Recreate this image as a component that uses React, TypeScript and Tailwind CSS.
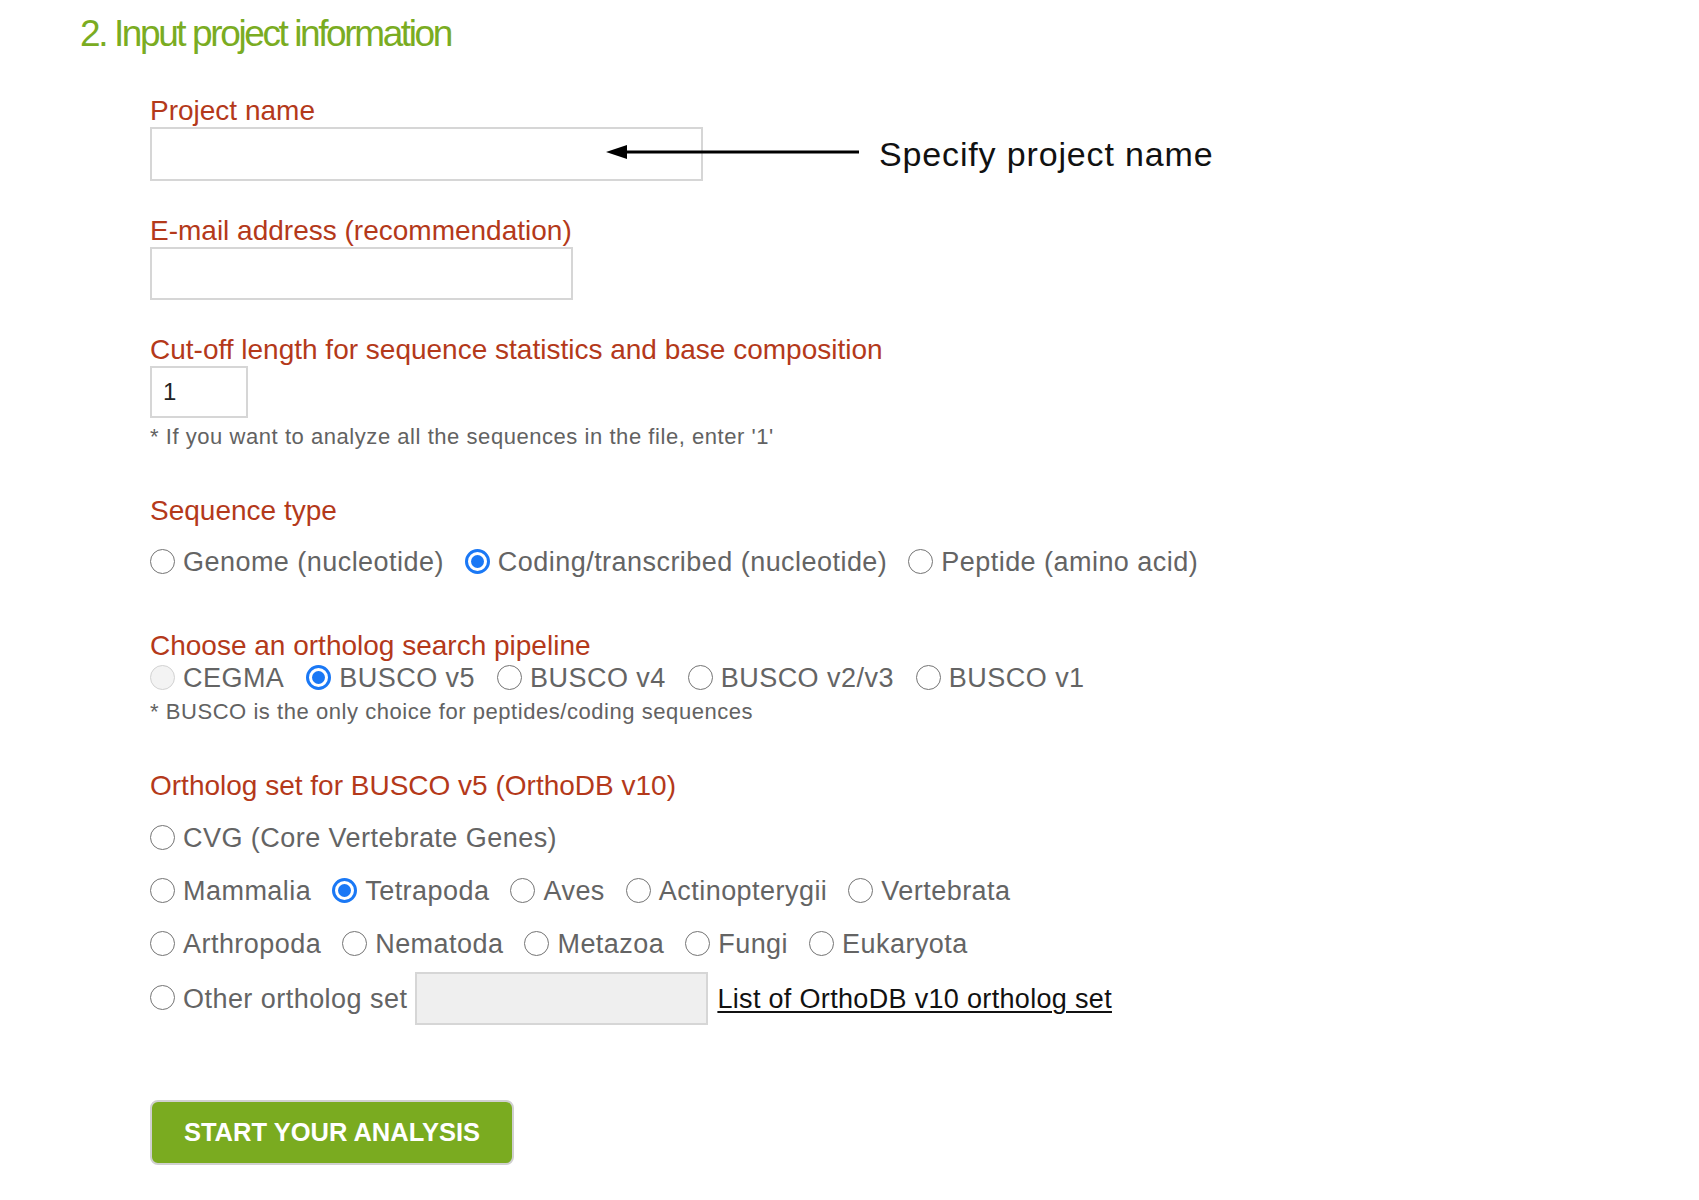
import React from "react";

const FONT = { fontFamily: '"Liberation Sans", Arial, Helvetica, sans-serif' };

type RadioState = "off" | "on" | "disabled";

function Radio({ state }: { state: RadioState }) {
  if (state === "on") {
    return (
      <span className="w-[25px] h-[25px] rounded-full border-[3px] border-[#1a78f5] bg-white shrink-0 flex items-center justify-center -translate-y-[1px]">
        <span className="w-[13px] h-[13px] rounded-full bg-[#1a78f5]" />
      </span>
    );
  }
  if (state === "disabled") {
    return (
      <span className="w-[25px] h-[25px] rounded-full border-[1.5px] border-[#d2d2d2] bg-[#f3f3f3] shrink-0 -translate-y-[1px]" />
    );
  }
  return (
    <span className="w-[25px] h-[25px] rounded-full border-[1.5px] border-[#747474] bg-white shrink-0 -translate-y-[1px]" />
  );
}

function Option({ label, state = "off" }: { label: string; state?: RadioState }) {
  return (
    <span className="flex items-center">
      <Radio state={state} />
      <span className="ml-[8px] text-[27px] leading-[32px] tracking-[0.017em] text-[#646464] whitespace-nowrap">
        {label}
      </span>
    </span>
  );
}

function Label({ children, className = "" }: { children: React.ReactNode; className?: string }) {
  return (
    <div className={`text-[28px] leading-[32px] text-[#b4391a] whitespace-nowrap ${className}`}>
      {children}
    </div>
  );
}

export default function App() {
  return (
    <div className="w-[1699px] min-h-[1200px] bg-white relative" style={FONT}>
      <div className="pt-[14px] pl-[80px]">
        <h2 className="text-[37px] leading-[40px] tracking-[-2.4px] text-[#7aac22] whitespace-nowrap">
          2. Input project information
        </h2>
      </div>

      <div className="pl-[150px]">
        <Label className="mt-[41px]">Project name</Label>
        <div className="relative h-[54px]">
          <div className="w-[553px] h-[54px] border-2 border-[#d6d6d6] bg-white" />
          <svg
            className="absolute left-[456px] top-[15px]"
            width="254"
            height="20"
            viewBox="0 0 254 20"
          >
            <line x1="16" y1="10" x2="253" y2="10" stroke="#000" strokeWidth="3" />
            <polygon points="0,10 21,3 21,17" fill="#000" />
          </svg>
          <div className="absolute left-[729px] top-[7px] text-[34px] leading-[40px] tracking-[0.025em] text-[#111] whitespace-nowrap">
            Specify project name
          </div>
        </div>

        <Label className="mt-[34px]">E-mail address (recommendation)</Label>
        <div className="w-[423px] h-[53px] border-2 border-[#d6d6d6] bg-white" />

        <Label className="mt-[34px]">Cut-off length for sequence statistics and base composition</Label>
        <div className="w-[98px] h-[52px] border-2 border-[#d6d6d6] bg-white flex items-center pl-[11px] text-[24px] text-[#222]">
          1
        </div>
        <div className="mt-[7px] h-[24px] text-[22px] leading-[24px] tracking-[0.025em] text-[#626262] whitespace-nowrap">
          * If you want to analyze all the sequences in the file, enter '1'
        </div>

        <Label className="mt-[46px]">Sequence type</Label>
        <div className="mt-[19px] h-[32px] flex items-center gap-[21px]">
          <Option label="Genome (nucleotide)" />
          <Option label="Coding/transcribed (nucleotide)" state="on" />
          <Option label="Peptide (amino acid)" />
        </div>

        <Label className="mt-[52px]">Choose an ortholog search pipeline</Label>
        <div className="mt-[1px] h-[30px] flex items-center gap-[22px]">
          <Option label="CEGMA" state="disabled" />
          <Option label="BUSCO v5" state="on" />
          <Option label="BUSCO v4" />
          <Option label="BUSCO v2/v3" />
          <Option label="BUSCO v1" />
        </div>
        <div className="mt-[7px] h-[24px] text-[22px] leading-[24px] tracking-[0.025em] text-[#626262] whitespace-nowrap">
          * BUSCO is the only choice for peptides/coding sequences
        </div>

        <Label className="mt-[46px]">Ortholog set for BUSCO v5 (OrthoDB v10)</Label>
        <div className="mt-[20px] h-[32px] flex items-center gap-[21px]">
          <Option label="CVG (Core Vertebrate Genes)" />
        </div>
        <div className="mt-[21px] h-[32px] flex items-center gap-[21px]">
          <Option label="Mammalia" />
          <Option label="Tetrapoda" state="on" />
          <Option label="Aves" />
          <Option label="Actinopterygii" />
          <Option label="Vertebrata" />
        </div>
        <div className="mt-[21px] h-[32px] flex items-center gap-[21px]">
          <Option label="Arthropoda" />
          <Option label="Nematoda" />
          <Option label="Metazoa" />
          <Option label="Fungi" />
          <Option label="Eukaryota" />
        </div>
        <div className="mt-[12px] h-[53px] flex items-center">
          <Option label="Other ortholog set" />
          <div className="ml-[8px] w-[293px] h-[53px] border-2 border-[#d6d6d6] bg-[#efefef]" />
          <a
            href="#"
            className="ml-[9px] text-[27px] leading-[32px] tracking-[0.012em] text-[#111] underline underline-offset-[3px] decoration-[2px] whitespace-nowrap"
          >
            List of OrthoDB v10 ortholog set
          </a>
        </div>

        <button
          type="button"
          className="mt-[75px] w-[364px] h-[65px] rounded-[8px] border-2 border-[#d0d0d0] bg-[#7aab20] text-white font-bold text-[25.5px] flex items-center justify-center"
        >
          START YOUR ANALYSIS
        </button>
      </div>
    </div>
  );
}
